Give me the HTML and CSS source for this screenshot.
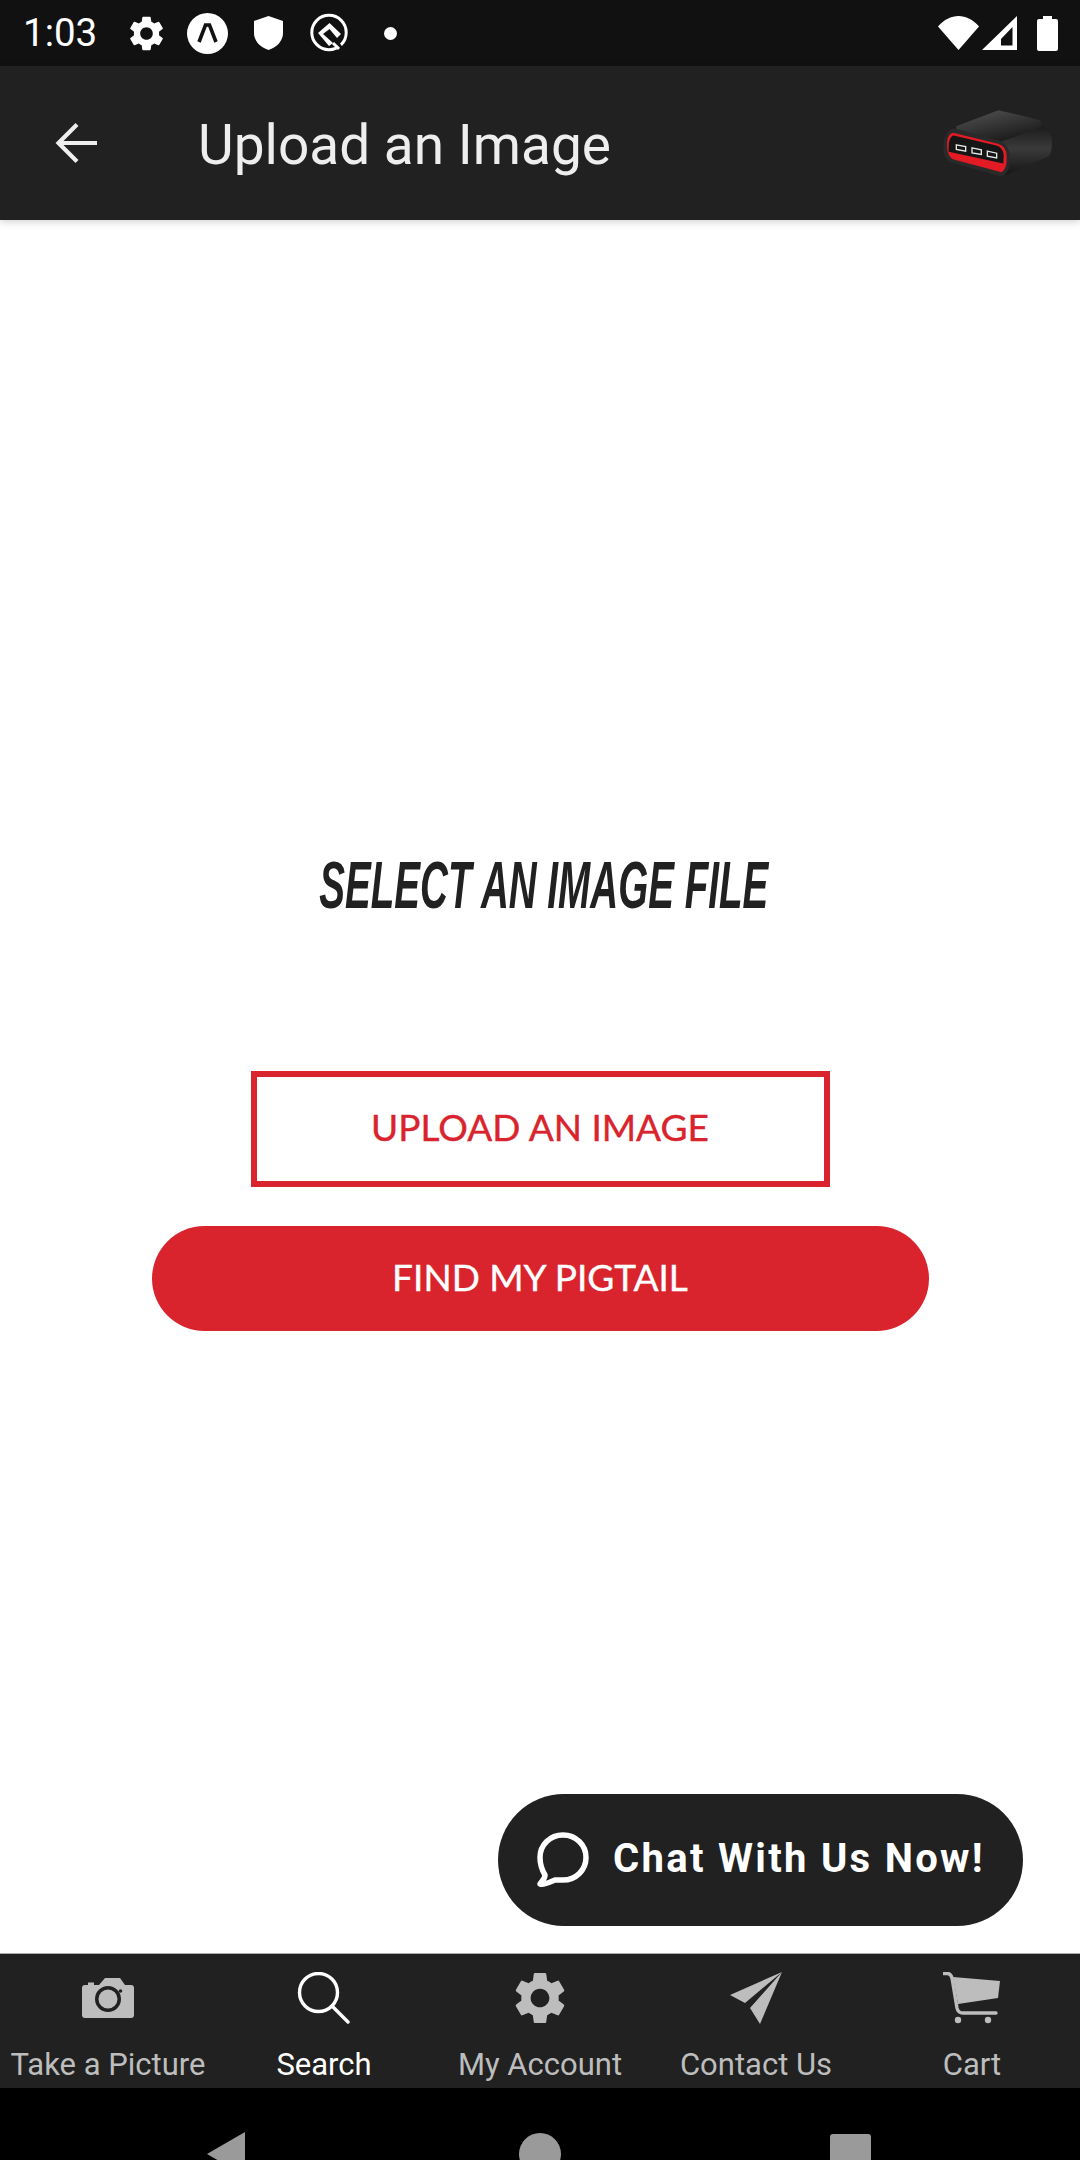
FILE: index.html
```html
<!DOCTYPE html>
<html lang="en">
<head>
<meta charset="utf-8">
<title>Upload an Image</title>
<link rel="stylesheet" href="styles.css">
</head>
<body>
<div class="app">
  <div class="status">
    <span class="clock">1:03</span>
    <svg class="st-gear" viewBox="2.6 2 18.8 20"><path fill="#fff" d="M19.14 12.94c.04-.3.06-.61.06-.94 0-.32-.02-.64-.07-.94l2.03-1.58a.49.49 0 0 0 .12-.61l-1.92-3.32a.488.488 0 0 0-.59-.22l-2.39.96c-.5-.38-1.03-.7-1.62-.94l-.36-2.54a.484.484 0 0 0-.48-.41h-3.84c-.24 0-.43.17-.47.41l-.36 2.54c-.59.24-1.13.57-1.62.94l-2.39-.96c-.22-.08-.47 0-.59.22L2.74 8.87c-.12.21-.08.47.12.61l2.03 1.58c-.05.3-.09.63-.09.94s.02.64.07.94l-2.03 1.58a.49.49 0 0 0-.12.61l1.92 3.32c.12.22.37.29.59.22l2.39-.96c.5.38 1.03.7 1.62.94l.36 2.54c.05.24.24.41.48.41h3.84c.24 0 .44-.17.47-.41l.36-2.54c.59-.24 1.13-.56 1.62-.94l2.39.96c.22.08.47 0 .59-.22l1.92-3.32c.12-.22.07-.47-.12-.61l-2.01-1.58zM12 15.6c-1.98 0-3.6-1.62-3.6-3.6s1.62-3.6 3.6-3.6 3.6 1.62 3.6 3.6-1.62 3.6-3.6 3.6z"/></svg>
    <svg class="st-a" viewBox="0 0 41 41"><circle cx="20.5" cy="20.5" r="20.5" fill="#fff"/><path d="M12 29 L18.500 12 H22.500 L29 29" fill="none" stroke="#111" stroke-width="3.600"/></svg>
    <svg class="st-shield" viewBox="0 0 29 34"><path fill="#fff" d="M14.5 0 L29 5 V17 C29 25 23 31 14.5 34 C6 31 0 25 0 17 V5 Z"/></svg>
    <svg class="st-q" viewBox="0 0 39 39"><circle cx="19" cy="19.5" r="17.2" fill="none" stroke="#fff" stroke-width="3"/><path fill="#fff" d="M8 20 L19.500 10 L31 21 L27 25 L19.500 16 L13 21 L23 30 L19 33 Z"/><path d="M26 28 L33 37" fill="none" stroke="#111" stroke-width="3"/><path d="M23 30 L29 36" fill="none" stroke="#fff" stroke-width="3"/></svg>
    <span class="st-dot"></span>
    <span class="st-spacer"></span>
    <svg class="st-wifi" viewBox="0 0 41 34"><path fill="#fff" d="M0 10.5 C12 -3.5 29 -3.5 41 10.5 L20.5 34 Z"/></svg>
    <svg class="st-signal" viewBox="0 0 35 34"><path fill="#fff" fill-rule="evenodd" d="M35 0 V34 H0 Z M30.5 11 L19 23 V29.5 H30.5 Z"/></svg>
    <svg class="st-batt" viewBox="0 0 21 35"><path fill="#fff" d="M6 0 H15 V3 H19 Q21 3 21 5 V33 Q21 35 19 35 H2 Q0 35 0 33 V5 Q0 3 2 3 H6 Z"/></svg>
  </div>

  <header class="appbar">
    <svg class="back" viewBox="0 0 44 44"><path d="M42 22 H4 M22 3.5 L3.500 22 L22 40.500" fill="none" stroke="#eee" stroke-width="4.200"/></svg>
    <span class="title">Upload an Image</span>
    <svg class="logo" viewBox="430 330 330 200">
      <defs>
        <linearGradient id="gTop" x1="0" y1="0" x2="0.6" y2="1"><stop offset="0" stop-color="#555"/><stop offset="1" stop-color="#1a1a1a"/></linearGradient>
        <linearGradient id="gSide" x1="0" y1="0" x2="0" y2="1"><stop offset="0" stop-color="#1c1c1c"/><stop offset="0.45" stop-color="#3a3a3a"/><stop offset="1" stop-color="#141414"/></linearGradient>
      </defs>
      <path fill="url(#gSide)" d="M590 408 L728 378 Q757 392 757 425 Q757 462 745 470 L612 527 L580 500 Z"/>
      <path fill="url(#gTop)" d="M470 378 L596 330 L722 360 L725 380 L605 424 L470 388 Z"/>
      <path fill="#2a2a2a" d="M462 384 L600 422 Q625 432 631 465 Q634 510 612 527 Q605 529 590 525 L455 487 Q432 478 431 445 Q431 395 462 384 Z"/>
      <path fill="#e21b25" d="M460 398 L595 431 Q620 438 621 468 Q623 505 606 516 L462 478 Q443 470 442 440 Q441 402 460 398 Z"/>
      <path fill="#161616" d="M462 406 L590 436 Q610 442 612 465 L611 490 L447 455 Q445 410 462 406 Z"/>
      <g fill="#161616" stroke="#e8e8e8" stroke-width="4">
        <path d="M470 434 L498 439 L498 453 L470 448 Z"/>
        <path d="M517 443 L545 449 L545 463 L517 458 Z"/>
        <path d="M563 453 L591 459 L591 473 L563 468 Z"/>
      </g>
    </svg>
  </header>

  <main class="main">
    <h1 class="heading">SELECT AN IMAGE FILE</h1>
    <button class="btn-outline">UPLOAD AN IMAGE</button>
    <button class="btn-solid">FIND MY PIGTAIL</button>
    <div class="chat">
      <svg class="chat-icon" viewBox="0 0 52 56"><path d="M26 3 C39 3 49 13 49 25.500 C49 38 39 48 26 48 C23 48 20 47.800 18 48 C13 50 8 53 3 52 C5 49 8 47 8 43 C5 38 3 32 3 25.500 C3 13 13 3 26 3 Z" fill="none" stroke="#fff" stroke-width="5.500" stroke-linejoin="round"/></svg>
      <span class="chat-text">Chat With Us Now!</span>
    </div>
  </main>

  <nav class="tabs">
    <div class="tab">
      <svg class="tab-icon" viewBox="0 0 52 52"><path fill="#bdbdbd" fill-rule="evenodd" d="M3 13 H6 V10.500 H12 V13 H17 L23 6 H38 L43 13 H49 Q52 13 52 16 V43 Q52 46 49 46 H3 Q0 46 0 43 V16 Q0 13 3 13 Z M26 14 A13 13 0 1 0 26.010 40 A13 13 0 1 0 26 14 Z M26 17.500 A9.500 9.500 0 1 1 25.990 36.500 A9.500 9.500 0 1 1 26 17.500 Z"/><circle cx="38.500" cy="19" r="1.800" fill="#212121"/></svg>
      <span class="tab-label">Take a Picture</span>
    </div>
    <div class="tab tab-active">
      <svg class="tab-icon" viewBox="0 0 52 52"><circle cx="20.500" cy="20.500" r="19" fill="none" stroke="#fff" stroke-width="3.400"/><path d="M34 34 L50 50" stroke="#fff" stroke-width="3.400" stroke-linecap="round"/></svg>
      <span class="tab-label">Search</span>
    </div>
    <div class="tab">
      <svg class="tab-icon" viewBox="2.600 2 18.800 20"><path fill="#bdbdbd" d="M19.140 12.940c.04-.3.06-.61.06-.94 0-.32-.02-.64-.07-.94l2.030-1.580a.49.49 0 0 0 .12-.61l-1.920-3.320a.488.488 0 0 0-.59-.22l-2.390.96c-.5-.38-1.030-.7-1.620-.94l-.36-2.540a.484.484 0 0 0-.48-.41h-3.840c-.24 0-.43.17-.47.41l-.36 2.540c-.59.24-1.130.57-1.620.94l-2.390-.96c-.22-.08-.47 0-.59.22L2.740 8.870c-.12.21-.08.47.12.61l2.030 1.580c-.05.3-.09.63-.09.94s.02.64.07.94l-2.030 1.580a.49.49 0 0 0-.12.61l1.920 3.320c.12.22.37.29.59.22l2.390-.96c.5.38 1.030.7 1.620.94l.36 2.540c.05.24.24.41.48.41h3.840c.24 0 .44-.17.47-.41l.36-2.540c.59-.24 1.130-.56 1.620-.94l2.390.96c.22.08.47 0 .59-.22l1.920-3.320c.12-.22.07-.47-.12-.61l-2.010-1.580zM12 15.600c-1.980 0-3.600-1.620-3.600-3.600s1.620-3.600 3.600-3.600 3.600 1.620 3.600 3.600-1.620 3.600-3.600 3.600z"/></svg>
      <span class="tab-label">My Account</span>
    </div>
    <div class="tab">
      <svg class="tab-icon" viewBox="0 0 52 52"><path fill="#bdbdbd" d="M52 0 L15 31 L0 23 Z M52 0 L30 52 L20 36 Z"/></svg>
      <span class="tab-label">Contact Us</span>
    </div>
    <div class="tab">
      <svg class="tab-icon" viewBox="0 0 58 52"><path fill="#bdbdbd" d="M10 5 L57 9 L55 26 L15 32 Z"/><path d="M1 1.500 H5 Q8 2 9 6 L14 36 Q15 41 20 41 H53" fill="none" stroke="#bdbdbd" stroke-width="3.400" stroke-linecap="round"/><circle cx="15" cy="48" r="3.200" fill="#bdbdbd"/><circle cx="45" cy="48" r="3.200" fill="#bdbdbd"/></svg>
      <span class="tab-label">Cart</span>
    </div>
  </nav>

  <div class="sysnav">
    <span class="sys-back"></span>
    <span class="sys-home"></span>
    <span class="sys-recent"></span>
  </div>
</div>
</body>
</html>
```

FILE: styles.css
```css
* { box-sizing: border-box; }
html, body { margin: 0; padding: 0; }
body { width: 1080px; height: 2160px; overflow: hidden; background: #fff; font-family: Roboto, "Liberation Sans", sans-serif; }
.app { width: 1080px; height: 2160px; display: flex; flex-direction: column; overflow: hidden; }

.status { height: 66px; flex: none; background: #111; display: flex; align-items: center; padding: 0 22px 0 23px; color: #fff; }
.clock { font-size: 38.5px; line-height: 66px; width: 107px; }
.st-gear { width: 33px; height: 35px; margin-top: 1px; }
.st-a { width: 41px; height: 41px; margin-left: 24px; }
.st-shield { width: 29px; height: 34px; margin-left: 26px; }
.st-q { width: 39px; height: 39px; margin-left: 27px; margin-top: -1px; }
.st-dot { width: 13px; height: 13px; border-radius: 50%; background: #fff; margin-left: 35px; }
.st-spacer { flex: 1; }
.st-wifi { width: 41px; height: 34px; }
.st-signal { width: 35px; height: 34px; margin-left: 3px; }
.st-batt { width: 21px; height: 35px; margin-left: 20px; }

.appbar { height: 154px; flex: none; background: #212121; display: flex; align-items: center; padding: 0 27px 0 55px; box-shadow: 0 2px 8px rgba(0,0,0,.18); position: relative; z-index: 1; }
.back { width: 44px; height: 44px; flex: none; }
.title { font-size: 55px; color: #eee; margin-left: 99px; flex: 1; padding-top: 3px; }
.logo { width: 110px; height: 67px; flex: none; }

.main { flex: 1; position: relative; background: #fff; display: flex; flex-direction: column; align-items: center; padding-top: 630px; }
.heading { margin: 0 0 0 8px; height: 70px; font-family: "Liberation Sans", sans-serif; font-style: italic; font-weight: 700; font-size: 66px; line-height: 70px; color: #212121; white-space: nowrap; transform: scaleX(.585); }
.btn-outline, .btn-solid { font-family: Lato, "Liberation Sans", sans-serif; font-size: 37px; font-weight: 400; -webkit-text-stroke: .4px currentColor; display: flex; align-items: center; justify-content: center; }
.btn-outline { margin-top: 151px; width: 579px; height: 116px; border: 6px solid #d9232d; background: #fff; color: #d9232d; padding: 0 0 6px; }
.btn-solid { margin-top: 39px; width: 777px; height: 105px; border: 0; border-radius: 53px; background: #d9232d; color: #fff; padding: 0 0 4px; }
.chat { position: absolute; left: 498px; top: 1574px; width: 525px; height: 132px; border-radius: 66px; background: #212121; display: flex; align-items: center; padding-left: 39px; }
.chat-icon { width: 52px; height: 56px; flex: none; }
.chat-text { color: #fff; font-size: 40px; font-weight: 700; letter-spacing: 2.3px; margin-left: 24px; white-space: nowrap; margin-top: -3px; }

.tabs { height: 135px; flex: none; background: #212121; border-top: 1px solid #aaa; display: flex; }
.tab { flex: 1; display: flex; flex-direction: column; align-items: center; padding-top: 18px; color: #bdbdbd; }
.tab-active { color: #fff; }
.tab-icon { height: 52px; width: 58px; flex: none; }
.tab-label { font-size: 31px; line-height: 38px; margin-top: 22px; white-space: nowrap; }

.sysnav { height: 72px; flex: none; background: #000; display: flex; overflow: hidden; padding-top: 44px; }
.sys-back { width: 0; height: 0; margin-left: 207px; border-style: solid; border-width: 22px 38px 22px 0; border-color: transparent #9a9a9a transparent transparent; margin-top: 0; }
.sys-home { width: 42px; height: 42px; border-radius: 50%; background: #9a9a9a; margin-left: 274px; margin-top: 1px; }
.sys-recent { width: 41px; height: 41px; border-radius: 3px; background: #9a9a9a; margin-left: 269px; margin-top: 2px; }
```
